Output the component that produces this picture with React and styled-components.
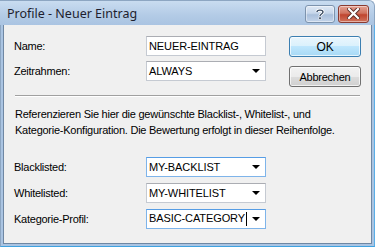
import React from 'react';
import styled, { createGlobalStyle } from 'styled-components';

const Global = createGlobalStyle`
  html, body {
    margin: 0;
    padding: 0;
    background: #ffffff;
  }
  body {
    font-family: "Liberation Sans", Arial, sans-serif;
    font-size: 11px;
    letter-spacing: -0.25px;
    color: #000;
  }
`;

const Window = styled.div`
  width: 375px;
  height: 247px;
  display: flex;
  flex-direction: column;
  box-sizing: border-box;
`;

const TitleBar = styled.div`
  height: 25px;
  flex: none;
  display: flex;
  align-items: center;
  padding: 0 5px 0 7px;
  box-sizing: border-box;
  background: linear-gradient(#c9dcf0, #b3cbe6 60%, #aac4e2);
  border-top-right-radius: 6px;
  border-top: 1px solid #8da6c2;
  border-right: 1px solid #8da6c2;
`;

const Title = styled.div`
  flex: 1;
  font-family: "Noto Sans", "Liberation Sans", sans-serif;
  font-size: 12.5px;
  color: #1e1e2e;
  letter-spacing: 0;
`;

const CaptionButtons = styled.div`
  display: flex;
  gap: 3px;
  margin-top: 1px;
`;

const CaptionButton = styled.div`
  width: ${p => p.$w}px;
  height: 18px;
  box-sizing: border-box;
  border-radius: 3px;
  display: flex;
  align-items: center;
  justify-content: center;
  border: 1px solid ${p => (p.$close ? '#8a3a30' : '#7d93ad')};
  background: ${p =>
    p.$close
      ? 'linear-gradient(#e4a193, #d0735f 45%, #c0452f 55%, #d0735c)'
      : 'linear-gradient(#dfe9f5, #c6d6ea 45%, #a9bfdb 55%, #c3d4ea)'};
  box-shadow: inset 0 0 0 1px rgba(255, 255, 255, 0.45);
`;

const Frame = styled.div`
  flex: 1;
  display: flex;
  background: #aac4e2;
  padding: 0 2px 2px 2px;
  border-left: 1px solid #8da6c2;
  border-right: 1px solid #5aaee6;
  border-bottom: 1px solid #3fa2e0;
`;

const Client = styled.div`
  flex: 1;
  background: #f0f0f0;
  border: 1px solid #6f87a3;
  border-top: none;
  padding: 11px 10px 0 10px;
  display: flex;
  flex-direction: column;
`;

const TopSection = styled.div`
  display: flex;
  align-items: flex-start;
`;

const FieldGrid = styled.div`
  display: grid;
  grid-template-columns: 132px 120px;
  grid-auto-rows: 20px;
  row-gap: ${p => p.$gap}px;
  align-items: center;
`;

const Label = styled.div`
  color: #000;
`;

const Field = styled.div`
  height: 20px;
  box-sizing: border-box;
  background: #fff;
  border: 1px solid ${p => (p.$active ? '#7eb4ea' : '#c5cad2')};
  border-top-color: ${p => (p.$active ? '#569de5' : '#abadb3')};
  display: flex;
  align-items: center;
  padding: 0 4px 0 2px;
  font-size: 11px;
  letter-spacing: -0.1px;
  color: #000;
`;

const FieldText = styled.span`
  flex: 1;
  white-space: nowrap;
`;

const Caret = styled.span`
  display: inline-block;
  width: 1px;
  height: 14px;
  background: #000;
  vertical-align: middle;
  margin-left: 1px;
`;

const Arrow = styled.span`
  width: 0;
  height: 0;
  border-left: 4px solid transparent;
  border-right: 4px solid transparent;
  border-top: 4px solid #000;
  margin-right: 1px;
`;

const ButtonColumn = styled.div`
  margin-left: 23px;
  display: flex;
  flex-direction: column;
  gap: 9px;
`;

const Button = styled.div`
  width: 72px;
  height: 21px;
  box-sizing: border-box;
  border-radius: 3px;
  display: flex;
  align-items: center;
  justify-content: center;
  color: #000;
  border: 1px solid ${p => (p.$default ? '#3c7fb1' : '#707070')};
  background: ${p =>
    p.$default
      ? 'linear-gradient(#eaf6fd, #d9f0fc 50%, #bee6fd 50%, #a7d9f5)'
      : 'linear-gradient(#f2f2f2, #ebebeb 50%, #dddddd 50%, #cfcfcf)'};
  box-shadow: inset 0 0 0 1px rgba(255, 255, 255, 0.7);
  font-size: ${p => (p.$default ? 12 : 11)}px;
`;

const Separator = styled.div`
  margin: 8px 1px 0 1px;
  height: 1px;
  background: #a0a0a0;
  border-bottom: 1px solid #ffffff;
`;

const Description = styled.p`
  margin: 9px 0 0 1px;
  line-height: 16px;
  color: #000;
`;

const BottomSection = styled.div`
  margin-top: 19px;
`;

function Select({ value, active, caret }) {
  return (
    <Field $active={active}>
      <FieldText>
        {value}
        {caret && <Caret />}
      </FieldText>
      <Arrow />
    </Field>
  );
}

function HelpIcon() {
  return (
    <svg width="10" height="12" viewBox="0 0 10 12">
      <path
        d="M2 4 C2 1.5 8 1.5 8 4 C8 6 5 6 5 8"
        fill="none"
        stroke="#fff"
        strokeWidth="3"
      />
      <path
        d="M2 4 C2 1.5 8 1.5 8 4 C8 6 5 6 5 8"
        fill="none"
        stroke="#3a4a60"
        strokeWidth="1.4"
      />
      <rect x="3.8" y="9" width="2.4" height="2.4" fill="#3a4a60" stroke="#fff" strokeWidth="0.6" />
    </svg>
  );
}

function CloseIcon() {
  return (
    <svg width="13" height="11" viewBox="0 0 13 11">
      <path d="M2 1 L11 10 M11 1 L2 10" stroke="#5a2a24" strokeWidth="4" strokeLinecap="square" />
      <path d="M2 1 L11 10 M11 1 L2 10" stroke="#ffffff" strokeWidth="2.2" strokeLinecap="square" />
    </svg>
  );
}

export default function App() {
  return (
    <>
      <Global />
      <Window>
        <TitleBar>
          <Title>Profile - Neuer Eintrag</Title>
          <CaptionButtons>
            <CaptionButton $w={30}>
              <HelpIcon />
            </CaptionButton>
            <CaptionButton $w={31} $close>
              <CloseIcon />
            </CaptionButton>
          </CaptionButtons>
        </TitleBar>
        <Frame>
          <Client>
            <TopSection>
              <FieldGrid $gap={5}>
                <Label>Name:</Label>
                <Field>
                  <FieldText>NEUER-EINTRAG</FieldText>
                </Field>
                <Label>Zeitrahmen:</Label>
                <Select value="ALWAYS" />
              </FieldGrid>
              <ButtonColumn>
                <Button $default>OK</Button>
                <Button>Abbrechen</Button>
              </ButtonColumn>
            </TopSection>
            <Separator />
            <Description>
              Referenzieren Sie hier die gewünschte Blacklist-, Whitelist-, und
              <br />
              Kategorie-Konfiguration. Die Bewertung erfolgt in dieser Reihenfolge.
            </Description>
            <BottomSection>
              <FieldGrid $gap={6}>
                <Label>Blacklisted:</Label>
                <Select value="MY-BACKLIST" active />
                <Label>Whitelisted:</Label>
                <Select value="MY-WHITELIST" />
                <Label>Kategorie-Profil:</Label>
                <Select value="BASIC-CATEGORY" active caret />
              </FieldGrid>
            </BottomSection>
          </Client>
        </Frame>
      </Window>
    </>
  );
}
